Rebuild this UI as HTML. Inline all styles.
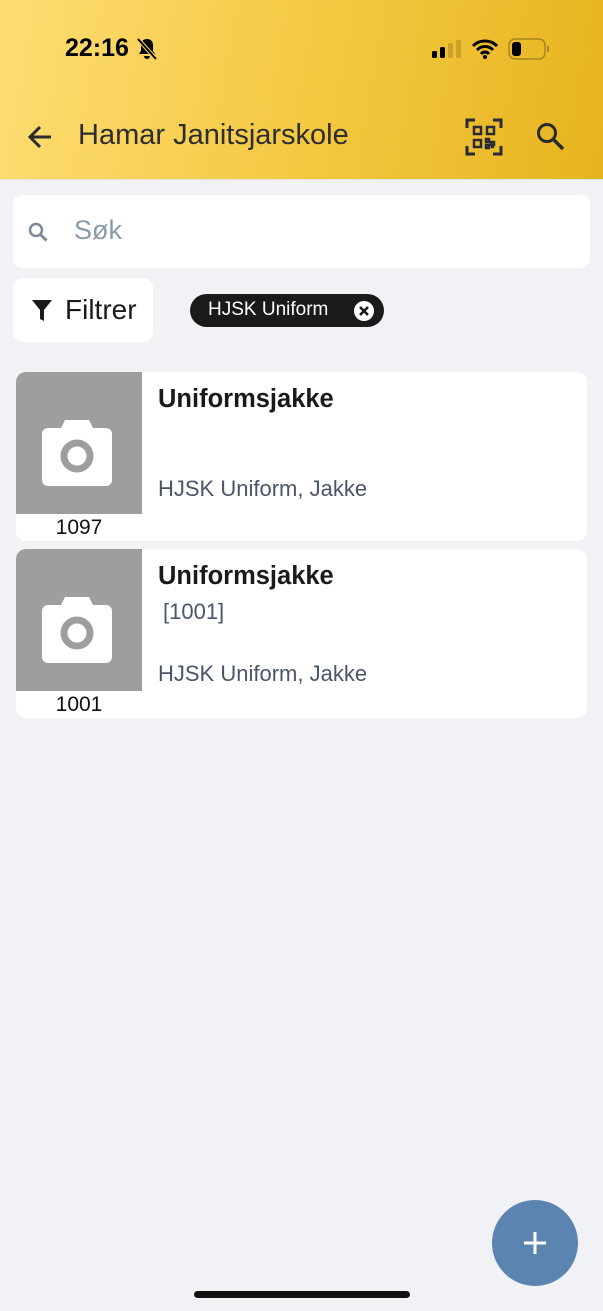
<!DOCTYPE html>
<html><head><meta charset="utf-8"><style>
*{margin:0;padding:0;box-sizing:border-box}
body{width:603px;height:1311px;background:#f1f2f6;font-family:"Liberation Sans",sans-serif;position:relative;overflow:hidden}
.hdr{position:absolute;left:0;top:0;width:603px;height:180px;background:linear-gradient(100deg,#fedd74 0%,#f3c73e 55%,#e6b41f 100%);border-bottom:1px solid #e2e2e2}
.abs{position:absolute}
.card{position:absolute;left:16px;width:571px;height:169px;background:#fff;border-radius:10px;overflow:hidden}
.img{position:absolute;left:0;top:0;width:126px;height:142px;background:#9e9e9e}
.num{position:absolute;left:0;top:142px;width:126px;text-align:center;font-size:21px;color:#111;line-height:27px}
.t{position:absolute;left:142px;font-size:25.5px;font-weight:bold;color:#1a1a1a}
.s{position:absolute;left:142px;font-size:22px;color:#4a5568}
</style></head><body>
<div class="hdr"></div>
<div class="abs" style="left:65px;top:34px;font-size:25px;font-weight:bold;color:#000">22:16</div>
<svg class="abs" style="left:136px;top:37px" width="22" height="24" viewBox="0 0 22 24"><path d="M11 2c-4 0-6 3-6 6v6l-2 3h16l-2-3V8c0-3-2-6-6-6z M8 19a3 3 0 0 0 6 0z" fill="#000"/><path d="M2 2l18 20" stroke="#f7d356" stroke-width="4"/><path d="M2 2l18 20" stroke="#000" stroke-width="2"/></svg>
<svg class="abs" style="left:432px;top:40px" width="30" height="18"><rect x="0" y="11" width="5" height="7" rx="1.5" fill="#000"/><rect x="8" y="7" width="5" height="11" rx="1.5" fill="#000"/><rect x="16" y="3" width="5" height="15" rx="1.5" fill="#c9a02a"/><rect x="24" y="0" width="5" height="18" rx="1.5" fill="#c9a02a"/></svg>
<svg class="abs" style="left:472px;top:39px" width="26" height="20" viewBox="0 0 26 20"><path d="M1 7a17 17 0 0 1 24 0M5 11a11 11 0 0 1 16 0M9 15a5 5 0 0 1 8 0" stroke="#000" stroke-width="3" fill="none"/><circle cx="13" cy="18" r="2" fill="#000"/></svg>
<svg class="abs" style="left:508px;top:38px" width="42" height="22"><rect x="1" y="1" width="36" height="20" rx="6" fill="none" stroke="#a88520" stroke-width="1.5"/><rect x="4" y="4" width="9" height="14" rx="3" fill="#000"/><rect x="39" y="8" width="2" height="6" rx="1" fill="#a88520"/></svg>
<svg class="abs" style="left:26px;top:123px" width="28" height="28" viewBox="0 0 28 28"><path d="M25 14H4M14 4L4 14l10 10" stroke="#2b2b2b" stroke-width="3" fill="none"/></svg>
<div class="abs" style="left:78px;top:119px;font-size:29px;color:#2d2d2d">Hamar Janitsjarskole</div>
<svg class="abs" style="left:465px;top:118px" width="38" height="38" viewBox="0 0 38 38" fill="none" stroke="#2a2a35" stroke-width="3"><path d="M2 10V2h8M28 2h8v8M36 28v8h-8M10 36H2v-8"/><rect x="9" y="9" width="7" height="7" stroke-width="2.5"/><rect x="22" y="9" width="7" height="7" stroke-width="2.5"/><rect x="9" y="22" width="7" height="7" stroke-width="2.5"/><path d="M21 21h3v3h-3zM26 24h3v3h-3zM21 27h3v3h-3zM26 29h3" stroke-width="2.5"/></svg>
<svg class="abs" style="left:535px;top:121px" width="32" height="32" viewBox="0 0 32 32"><circle cx="12" cy="12" r="8.5" stroke="#2b2b2b" stroke-width="3" fill="none"/><path d="M18 18l10 10" stroke="#2b2b2b" stroke-width="3.5"/></svg>
<div class="abs" style="left:13px;top:195px;width:577px;height:73px;background:#fff;border-radius:9px"></div>
<svg class="abs" style="left:27px;top:221px" width="24" height="24" viewBox="0 0 24 24"><circle cx="9" cy="9" r="6" stroke="#7d8a97" stroke-width="2.5" fill="none"/><path d="M13.5 13.5l6 6" stroke="#7d8a97" stroke-width="3"/></svg>
<div class="abs" style="left:74px;top:215px;font-size:27px;color:#8a9aa8">Søk</div>
<div class="abs" style="left:13px;top:278px;width:140px;height:64px;background:#fff;border-radius:10px"></div>
<svg class="abs" style="left:31px;top:299px" width="22" height="24" viewBox="0 0 22 24"><path d="M1 1h20l-8 10v11l-4-2v-9z" fill="#1a1a1a"/></svg>
<div class="abs" style="left:65px;top:294px;font-size:28px;color:#1a1a1a">Filtrer</div>
<div class="abs" style="left:190px;top:294px;width:194px;height:33px;background:#1a1a1a;border-radius:17px"></div>
<div class="abs" style="left:208px;top:299px;font-size:19px;color:#fff">HJSK Uniform</div>
<svg class="abs" style="left:353px;top:300px" width="22" height="22"><circle cx="11" cy="11" r="10" fill="#fff"/><path d="M7 7l8 8M15 7l-8 8" stroke="#1a1a1a" stroke-width="2.6"/></svg>

<div class="card" style="top:372px">
<div class="img"><svg style="position:absolute;left:25px;top:48px" width="72" height="66" viewBox="0 0 72 66"><path d="M24 0h24l4 8h13a6 6 0 0 1 6 6v46a6 6 0 0 1-6 6H7a6 6 0 0 1-6-6V14a6 6 0 0 1 6-6h13z" fill="#fff"/><circle cx="36" cy="36" r="13" stroke="#9e9e9e" stroke-width="7" fill="none"/></svg></div>
<div class="num">1097</div>
<div class="t" style="top:13px">Uniformsjakke</div>
<div class="s" style="top:104px">HJSK Uniform, Jakke</div>
</div>
<div class="card" style="top:549px">
<div class="img"><svg style="position:absolute;left:25px;top:48px" width="72" height="66" viewBox="0 0 72 66"><path d="M24 0h24l4 8h13a6 6 0 0 1 6 6v46a6 6 0 0 1-6 6H7a6 6 0 0 1-6-6V14a6 6 0 0 1 6-6h13z" fill="#fff"/><circle cx="36" cy="36" r="13" stroke="#9e9e9e" stroke-width="7" fill="none"/></svg></div>
<div class="num">1001</div>
<div class="t" style="top:13px">Uniformsjakke</div>
<div class="s" style="top:50px;left:147px">[1001]</div>
<div class="s" style="top:112px">HJSK Uniform, Jakke</div>
</div>

<div class="abs" style="left:492px;top:1200px;width:86px;height:86px;border-radius:50%;background:#5b84b1"></div>
<svg class="abs" style="left:522px;top:1230px" width="26" height="26"><path d="M13 2v22M2 13h22" stroke="#fff" stroke-width="3"/></svg>
<div class="abs" style="left:194px;top:1291px;width:216px;height:7px;border-radius:4px;background:#111"></div>
</body></html>
